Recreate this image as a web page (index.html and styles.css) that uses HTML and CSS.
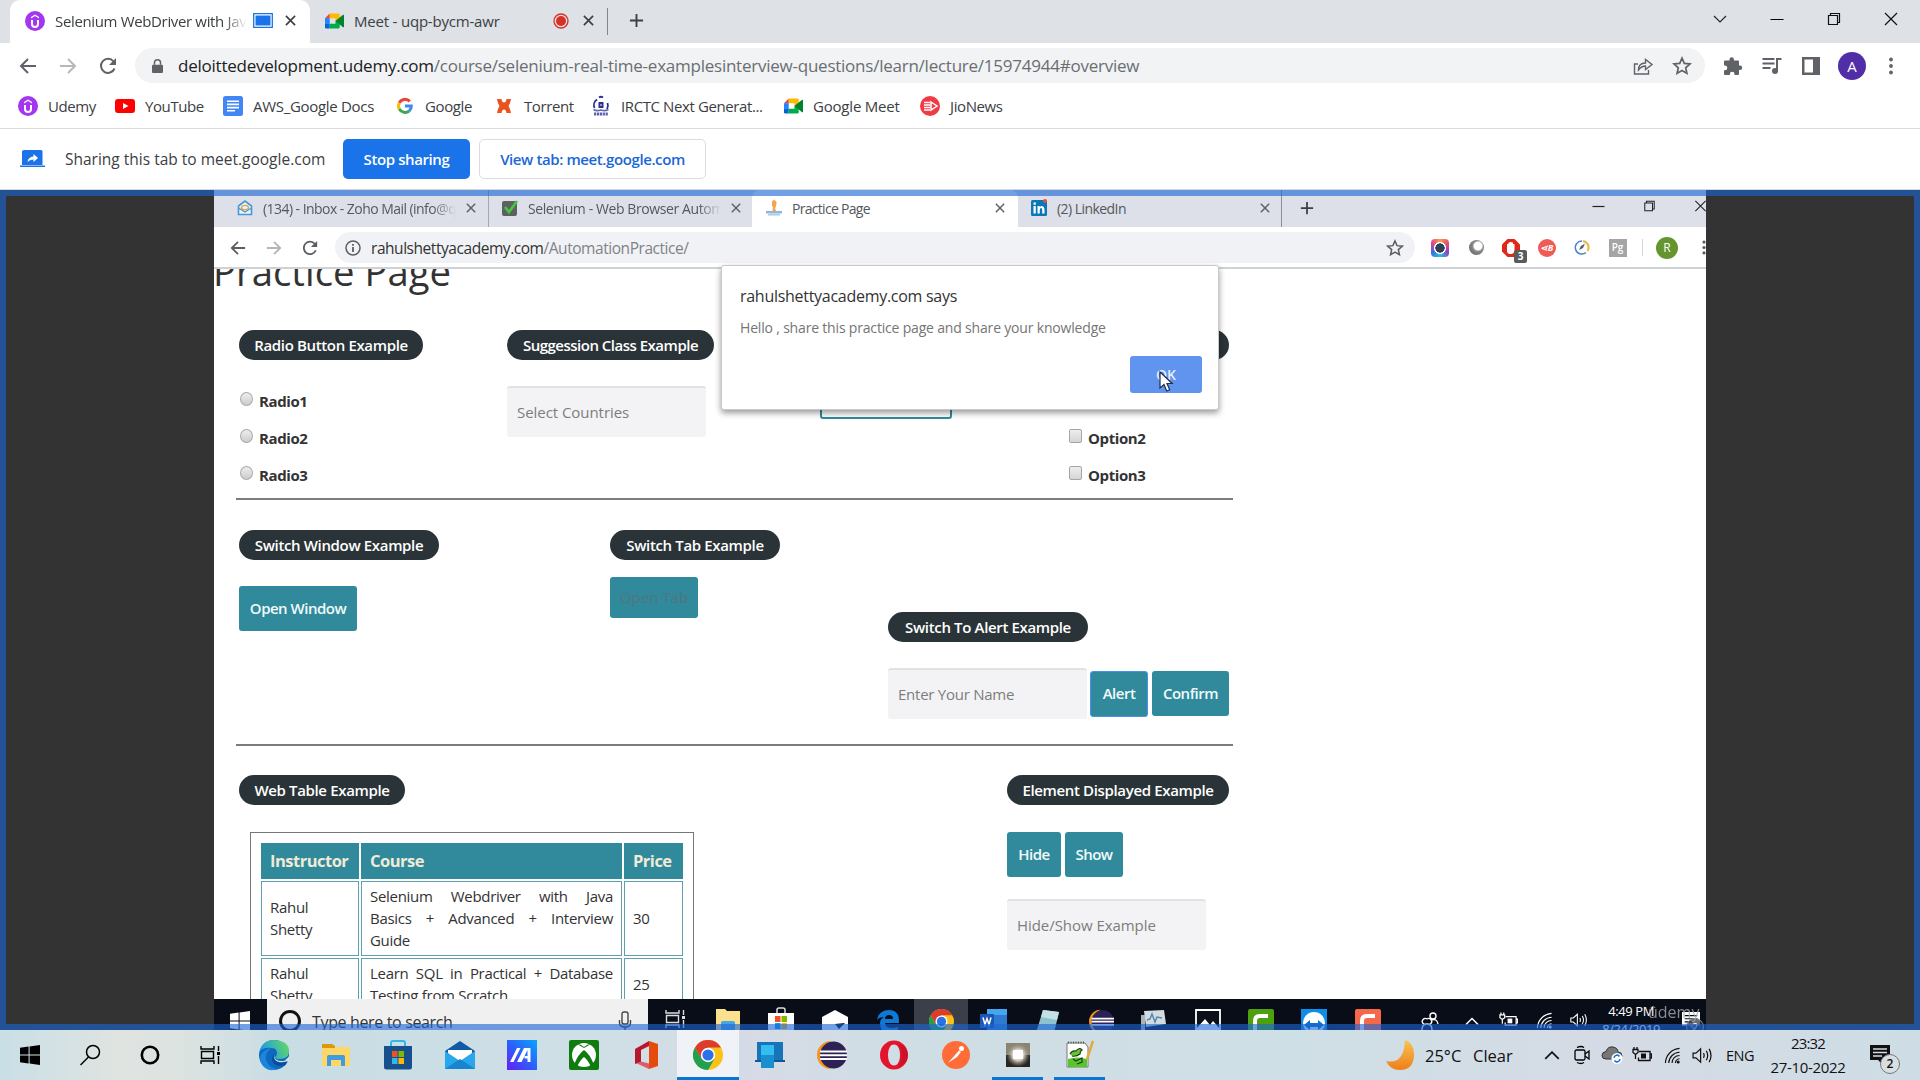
FILE: index.html
```html
<!DOCTYPE html>
<html lang="en">
<head>
<meta charset="utf-8">
<title>Selenium WebDriver with Java</title>
<link rel="stylesheet" href="styles.css">
</head>
<body>
<svg class="sprite" aria-hidden="true">
  <symbol id="close" viewBox="0 0 12 12"><path d="M1 1l10 10M11 1L1 11" fill="none" stroke="currentColor" stroke-width="1.8"/></symbol>
  <symbol id="winclose" viewBox="0 0 14 14"><path d="M1 1l12 12M13 1L1 13" fill="none" stroke="currentColor" stroke-width="1.2"/></symbol>
  <symbol id="restore" viewBox="0 0 14 14"><path d="M1.500 3.500h9v9h-9zM3.500 3.500v-2h9v9h-2" fill="none" stroke="currentColor" stroke-width="1.200"/></symbol>
  <symbol id="plus" viewBox="0 0 16 16"><path d="M8 1v14M1 8h14" fill="none" stroke="currentColor" stroke-width="2"/></symbol>
  <symbol id="back" viewBox="0 0 18 18"><path d="M17 9H2M9 2L2 9l7 7" fill="none" stroke="currentColor" stroke-width="2"/></symbol>
  <symbol id="fwd" viewBox="0 0 18 18"><path d="M1 9h15M9 2l7 7-7 7" fill="none" stroke="currentColor" stroke-width="2"/></symbol>
  <symbol id="reload" viewBox="0 0 18 18"><path d="M15.500 11.500A7 7 0 1 1 14.500 4.500" fill="none" stroke="currentColor" stroke-width="2"/><path d="M17 1v7h-7z" fill="currentColor"/></symbol>
  <symbol id="star" viewBox="0 0 20 20"><path d="M10 2.200l2.300 5.200 5.700.6-4.300 3.800 1.200 5.600L10 14.500l-4.900 2.900 1.200-5.600L2 8l5.700-.6z" fill="none" stroke="currentColor" stroke-width="1.700"/></symbol>
  <symbol id="dots" viewBox="0 0 4 18"><circle cx="2" cy="2.500" r="1.900"/><circle cx="2" cy="9" r="1.900"/><circle cx="2" cy="15.500" r="1.900"/></symbol>
  <symbol id="udemy" viewBox="0 0 20 20"><circle cx="10" cy="10" r="10" fill="#a435f0"/><path d="M6 6l4-2.500L14 6v1.500L10 5 6 7.500zM6 9v4a4 4 0 0 0 8 0V9h-2v4a2 2 0 0 1-4 0V9z" fill="#fff"/></symbol>
  <symbol id="meet" viewBox="0 0 20 16"><path d="M0 5L5 0v5z" fill="#ea4335"/><path d="M5 0h9a1.500 1.500 0 0 1 1.500 1.500V6L11 8V5H5z" fill="#ffba00"/><path d="M0 5h5v6H0z" fill="#2684fc"/><path d="M0 11h5v5H1.500A1.500 1.500 0 0 1 0 14.500z" fill="#0066da"/><path d="M5 11h6V8l4.500-2v8.500A1.500 1.500 0 0 1 14 16H5z" fill="#00ac47"/><path d="M11 8l8-6.500c.5-.4 1 0 1 .5v12c0 .5-.5.9-1 .5z" fill="#00832d"/></symbol>
  <symbol id="win" viewBox="0 0 20 20"><path d="M0 2.800L8.600 1.600v7.900H0zM9.600 1.500L20 0v9.500H9.600zM0 10.500h8.600v7.900L0 17.200zM9.600 10.500H20V20L9.600 18.500z" fill="currentColor"/></symbol>
  <symbol id="taskview" viewBox="0 0 22 20"><path d="M2 1v3h13V1M2 19v-3h13v3M2.500 6.500h12v7h-12zM19.500 1v5M19.500 11v8" fill="none" stroke="currentColor" stroke-width="1.400"/><path d="M18 7h3v3h-3z" fill="currentColor"/></symbol>
  <symbol id="chrome" viewBox="0 0 30 30"><circle cx="15" cy="15" r="15" fill="#fbc116"/><path d="M2 7.500A15 15 0 0 0 15 30l6.500-11.200L8.500 18.700z" fill="#20a050"/><path d="M2 7.500A15 15 0 0 1 28 7.500H15v7l-6.500 4.200z" fill="#de3b2f"/><circle cx="15" cy="15" r="7.200" fill="#fff"/><circle cx="15" cy="15" r="5.600" fill="#2b72e8"/></symbol>
  <symbol id="eclipse" viewBox="0 0 30 30"><path d="M14 1A14 14 0 0 0 14 29 16 16 0 0 1 14 1z" fill="#f59320"/><circle cx="16.500" cy="15" r="13.500" fill="#2c2255"/><path d="M3 10.500h27v2H3zM3 14.200h27v2H3zM3 18h27v2H3z" fill="#fff"/></symbol>
  <symbol id="battery" viewBox="0 0 20 16"><path d="M7 4.500h11v9H6.500v-3M18 7h1.500v4H18M1 2.500h5v3l-2.500 2-2.500-2zM2 0v3M5 0v3M3.500 7v5" fill="none" stroke="currentColor" stroke-width="1.300"/><path d="M9 6.500h5v5H9z" fill="currentColor"/></symbol>
  <symbol id="wifi" viewBox="0 0 18 18"><path d="M1.500 17A16 16 0 0 1 16.500 1.500M5 17A12 12 0 0 1 16.500 5.500M8.500 17a8 8 0 0 1 8-8M12 17a5 5 0 0 1 4.500-4.500" fill="none" stroke="currentColor" stroke-width="1.200"/><circle cx="15" cy="16" r="1.600" fill="currentColor"/></symbol>
  <symbol id="speaker" viewBox="0 0 22 18"><path d="M1 6.500h3L9 2v14L4 11.500H1zM12 6.500q1.500 2.500 0 5M15 4q3 5 0 10M18 2q4 7 0 14" fill="none" stroke="currentColor" stroke-width="1.300"/></symbol>
  <symbol id="caret" viewBox="0 0 14 8"><path d="M1 7l6-6 6 6" fill="none" stroke="currentColor" stroke-width="1.500"/></symbol>
  <symbol id="note" viewBox="0 0 20 20"><path d="M0 0h20v15h-7v5l-5-5H0z" fill="currentColor"/><path d="M3 4h14M3 7.500h14M3 11h9" stroke="var(--gap)" stroke-width="1.300"/></symbol>
  <symbol id="folder" viewBox="0 0 28 24"><path d="M0 1h11l2 3h15v19H0z" fill="#ffd767"/><path d="M0 1h10l3 2v2H0z" fill="#d99a10"/><path d="M5 23v-9q0-2 2-2h14q2 0 2 2v9h-4v-6H9v6z" fill="#3f9be2"/></symbol>
</svg>

<header class="chrome">
  <div class="tabstrip">
    <div class="tab tab-active">
      <svg class="i20"><use href="#udemy"/></svg>
      <span class="tab-title fade">Selenium WebDriver with Java</span>
      <svg class="sharing-mark" viewBox="0 0 20 15"><path d="M.7.700h18.600v13.600H.7z" fill="#fff" stroke="#1a73e8" stroke-width="1.300"/><path d="M2.500 2.500h15v10h-15z" fill="#1a73e8"/></svg>
      <svg class="x12"><use href="#close"/></svg>
    </div>
    <div class="tab tab-meet">
      <svg class="meet-ico"><use href="#meet"/></svg>
      <span class="tab-title">Meet - uqp-bycm-awr</span>
      <svg class="i16" viewBox="0 0 16 16"><circle cx="8" cy="8" r="7" fill="none" stroke="#d93025" stroke-width="1.300"/><circle cx="8" cy="8" r="5" fill="#d93025"/></svg>
      <svg class="x12"><use href="#close"/></svg>
    </div>
    <svg class="new-tab"><use href="#plus"/></svg>
    <div class="win-buttons">
      <svg class="chev" viewBox="0 0 14 8"><path d="M1 1l6 6 6-6" fill="none" stroke="#222" stroke-width="1.100"/></svg>
      <svg class="i14" viewBox="0 0 14 14"><path d="M.5 7.500h13" stroke="#000"/></svg>
      <svg class="i14"><use href="#restore"/></svg>
      <svg class="i14"><use href="#winclose"/></svg>
    </div>
  </div>

  <div class="toolbar">
    <svg class="nav"><use href="#back"/></svg>
    <svg class="nav dim"><use href="#fwd"/></svg>
    <svg class="nav"><use href="#reload"/></svg>
    <div class="omnibox">
      <svg class="lock" viewBox="0 0 12 15"><path d="M1 6h10q1 0 1 1v7q0 1-1 1H1q-1 0-1-1V7q0-1 1-1z" fill="#5f6368"/><path d="M2.700 6V4a3.300 3.300 0 0 1 6.600 0v2" fill="none" stroke="#5f6368" stroke-width="1.600"/></svg>
      <span class="url"><b>deloittedevelopment.udemy.com</b>/course/selenium-real-time-examplesinterview-questions/learn/lecture/15974944#overview</span>
      <svg class="i20 share" viewBox="0 0 20 20"><path d="M5 8H1.500v10h14v-4M5.500 14q0-7 7-7V3.500L19 8.500l-6.500 5V10q-4 0-7 4z" fill="none" stroke="currentColor" stroke-width="1.400"/></svg>
      <svg class="i20"><use href="#star"/></svg>
    </div>
    <div class="actions">
      <svg class="i20" viewBox="0 0 20 20"><path d="M1 5.500q0-1 1-1h4.500V3.500a2.200 2.200 0 0 1 4.400 0v1H15q1 0 1 1V9.500h1a2.200 2.200 0 0 1 0 4.400h-1V18q0 1-1 1h-3.500v-1a2.300 2.300 0 0 0-4.600 0v1H2q-1 0-1-1v-3.800h1a2.300 2.300 0 0 0 0-4.600H1z" fill="currentColor"/></svg>
      <svg class="i20" viewBox="0 0 20 20"><path d="M.5 3h12M.5 7.500h12M.5 12h8M15 15V3h4.500" fill="none" stroke="currentColor" stroke-width="2"/><circle cx="13" cy="15" r="3" fill="currentColor"/></svg>
      <svg class="i20" viewBox="0 0 20 20"><path d="M1 1h18v18H1zM3.500 3.500v13H12v-13z" fill="currentColor" fill-rule="evenodd"/></svg>
      <span class="avatar">A</span>
      <svg class="dots"><use href="#dots"/></svg>
    </div>
  </div>

  <nav class="bookmarks">
    <a class="bk b1"><svg class="i20"><use href="#udemy"/></svg><span>Udemy</span></a>
    <a class="bk b2"><svg class="i20" viewBox="0 0 20 20"><rect y="3" width="20" height="14" rx="3" fill="#f00"/><path d="M8 7l5.500 3L8 13z" fill="#fff"/></svg><span>YouTube</span></a>
    <a class="bk b3"><svg class="i20" viewBox="0 0 20 20"><rect width="20" height="20" rx="2.500" fill="#4285f4"/><path d="M4 5.200h12M4 8.400h12M4 11.600h12M4 14.800h8" stroke="#fff" stroke-width="1.600"/></svg><span>AWS_Google Docs</span></a>
    <a class="bk b4"><svg class="i16" viewBox="0 0 16 16"><g fill="none" stroke-width="3"><path d="M12.800 3.400A6.500 6.500 0 0 0 2.300 4.900" stroke="#ea4335"/><path d="M2.300 4.900a6.500 6.500 0 0 0 0 6.200" stroke="#fbbc05"/><path d="M2.300 11.100a6.500 6.500 0 0 0 10 1.700" stroke="#34a853"/><path d="M12.300 12.800A6.500 6.500 0 0 0 14.300 8H8" stroke="#4285f4"/></g></svg><span>Google</span></a>
    <a class="bk b5"><svg class="i16" viewBox="0 0 16 16"><path d="M1 1h4.500q.5 3.500 2.500 3.500T10.500 1H15q-.5 4-2.500 7 2 3 2.500 7h-4.500q-.5-3.500-2.500-3.500T5.500 15H1q.5-4 2.500-7Q1.500 5 1 1z" fill="#e9531d"/></svg><span>Torrent</span></a>
    <a class="bk b6"><svg class="i20" viewBox="0 0 20 20"><path d="M6 3.500A7 7 0 0 0 3.500 12M16.500 7a7 7 0 0 1-.5 6M8 1.500q2-1.500 4 0" fill="none" stroke="#2c2f8f" stroke-width="1.800"/><path d="M7.500 6h5v6h-5z" fill="#2c2f8f"/><path d="M9 9h2" stroke="#fff"/><path d="M2.500 13.500q3 2 7.500.5 4 1.500 7.500-.5" fill="none" stroke="#6467b0" stroke-width="1.600"/><path d="M3 18h14" stroke="#5c5fae" stroke-width="3" stroke-dasharray="2.200 .7"/></svg><span>IRCTC Next Generat...</span></a>
    <a class="bk b7"><svg class="meet-ico"><use href="#meet"/></svg><span>Google Meet</span></a>
    <a class="bk b8"><svg class="i20" viewBox="0 0 20 20"><circle cx="10" cy="10" r="10" fill="#f03b47"/><path d="M4 6.500h6M4 9h6M4 11.500h6M4 14h6" stroke="#fff" stroke-width="1.300"/><path d="M11 6l6 4-6 4z" fill="none" stroke="#fff" stroke-width="1.500"/></svg><span>JioNews</span></a>
  </nav>

  <div class="sharebar">
    <svg class="share-ico" viewBox="0 0 25 18"><path d="M4 0h17q1.500 0 1.500 1.500V15H2V1.500Q2 0 4 0zM0 15.500h25V17H0z" fill="#1a73e8"/><path d="M7.500 12q.5-5 6-5.500V4l4.500 4-4.500 4V9.500q-4 0-6 2.500z" fill="#fff"/></svg>
    <span class="share-text">Sharing this tab to meet.google.com</span>
    <button class="stop">Stop sharing</button>
    <button class="view">View tab: meet.google.com</button>
  </div>
</header>

<main class="stage">
  <section class="video">
    <div class="v-tabs">
      <div class="v-tab vt1"><svg class="i16" viewBox="0 0 16 16"><path d="M1.500 6L8 1l6.500 5v8.500h-13z" fill="#eaf4fc" stroke="#4a98d3" stroke-width="1.600"/><path d="M1.500 8L8 12l6.500-4" fill="none" stroke="#4a98d3" stroke-width="1.400"/><ellipse cx="8" cy="7.500" rx="3.500" ry="2.200" fill="none" stroke="#d9a54e" stroke-width="1.300"/></svg><span class="fade">(134) - Inbox - Zoho Mail (info@q</span><svg class="x10"><use href="#close"/></svg></div>
      <div class="v-tab vt2"><svg class="i16" viewBox="0 0 16 16"><rect y="1" width="15" height="15" rx="2" fill="#5d625f"/><path d="M3 7l4 5L15 1" fill="none" stroke="#45c645" stroke-width="2.600"/></svg><span class="fade">Selenium - Web Browser Automa</span><svg class="x10"><use href="#close"/></svg></div>
      <div class="v-tab vt3"><svg class="i16" viewBox="0 0 16 16"><path d="M7 0q4 0 3.500 4Q10 7 9 8l1 3H6.500L7 7 6 6V2z" fill="#f3a64a"/><path d="M0 11h16v2.500H0z" fill="#8db7dc"/><path d="M2 14h12v1.500H2z" fill="#a9c9e4"/></svg><span>Practice Page</span><svg class="x10"><use href="#close"/></svg></div>
      <div class="v-tab vt4"><svg class="i16" viewBox="0 0 16 16"><rect width="16" height="16" rx="1.500" fill="#0a77b7"/><path d="M2.500 6h2.300v7.500H2.500zM2.500 2.500h2.300v2.200H2.500zM6.500 6h2.200v1q2-2 4 0 .8 1 .8 3v3.500h-2.300V10q0-2-1.200-2T8.800 10v3.500H6.500z" fill="#fff"/><circle cx="14" cy="1" r="2" fill="#e0533f"/></svg><span>(2) LinkedIn</span><svg class="x10"><use href="#close"/></svg></div>
      <svg class="v-plus"><use href="#plus"/></svg>
      <div class="v-win"><svg viewBox="0 0 12 12"><path d="M0 6.500h12" stroke="#222" stroke-width="1.200"/></svg><svg><use href="#restore"/></svg><svg><use href="#winclose"/></svg></div>
    </div>
    <div class="v-bar">
      <svg class="i16"><use href="#back"/></svg>
      <svg class="i16 dim"><use href="#fwd"/></svg>
      <svg class="i16"><use href="#reload"/></svg>
      <div class="v-omni">
        <svg class="i16" viewBox="0 0 16 16"><circle cx="8" cy="8" r="7" fill="none" stroke="#5a5d61" stroke-width="1.500"/><path d="M8 7v5M8 4v1.800" stroke="#5a5d61" stroke-width="1.800"/></svg>
        <span class="v-url"><b>rahulshettyacademy.com</b>/AutomationPractice/</span>
        <svg class="i18"><use href="#star"/></svg>
      </div>
      <div class="v-ext">
        <span class="ext-lens"></span>
        <span class="ext-ball"></span>
        <span class="ext-block"><svg viewBox="0 0 18 18"><path d="M5.500 0h7L18 5.500v7L12.500 18h-7L0 12.500v-7z" fill="#e0281a"/><path d="M5 9V5h1.500V3.500H8V3h1.500v.5H11V5h1.500v6q0 4-4 4T5 11z" fill="#fff"/></svg><em>3</em></span>
        <span class="ext-b">⋖B</span>
        <svg class="i18" viewBox="0 0 18 18"><path d="M9 2a6.500 6.500 0 1 0 4 11.500" fill="none" stroke="#4a83c9" stroke-width="1.500"/><path d="M10 2a6.500 6.500 0 0 1 4.500 10" fill="none" stroke="#eeb54a" stroke-width="2"/><path d="M6 11l2-4 4-2.500L10 9z" fill="#4d5a67"/></svg>
        <span class="ext-pg">Pg</span>
        <span class="v-avatar">R</span>
        <svg class="v-dots"><use href="#dots"/></svg>
      </div>
    </div>

    <article class="page">
      <div class="heading"><h1>Practice Page</h1></div>
      <div class="row row1">
        <div class="c-radio">
          <span class="pill p-radio">Radio Button Example</span>
          <div class="opts">
            <label><i class="radio"></i>Radio1</label>
            <label><i class="radio"></i>Radio2</label>
            <label><i class="radio"></i>Radio3</label>
          </div>
        </div>
        <div class="c-sugg">
          <span class="pill p-sugg">Suggession Class Example</span>
          <div class="field f-count">Select Countries</div>
        </div>
        <div class="c-drop"><div class="dropdown"></div></div>
        <div class="c-check">
          <span class="pill p-check"></span>
          <div class="opts">
            <label><i class="check"></i>Option1</label>
            <label><i class="check"></i>Option2</label>
            <label><i class="check"></i>Option3</label>
          </div>
        </div>
      </div>
      <div class="rule"></div>
      <div class="row row2">
        <div class="c-win"><span class="pill p-win">Switch Window Example</span><div class="btn btn-win">Open Window</div></div>
        <div class="c-tab"><span class="pill p-tab">Switch Tab Example</span><div class="btn btn-tab">Open Tab</div></div>
        <div class="c-alert"><span class="pill p-alert">Switch To Alert Example</span>
          <div class="line"><div class="field">Enter Your Name</div><div class="btn btn-alert">Alert</div><div class="btn btn-conf">Confirm</div></div>
        </div>
      </div>
      <div class="rule"></div>
      <div class="row row3">
        <div class="c-table"><span class="pill p-table">Web Table Example</span>
          <div class="frame">
            <table>
              <tr><th class="w1">Instructor</th><th class="w2">Course</th><th class="w3">Price</th></tr>
              <tr class="r1"><td>Rahul Shetty</td><td class="just">Selenium Webdriver with Java Basics + Advanced + Interview Guide</td><td>30</td></tr>
              <tr class="r2"><td>Rahul Shetty</td><td class="just">Learn SQL in Practical + Database Testing from Scratch</td><td>25</td></tr>
            </table>
          </div>
        </div>
        <div class="c-elem"><span class="pill p-elem">Element Displayed Example</span>
          <div class="line"><div class="btn btn-hide">Hide</div><div class="btn btn-show">Show</div></div>
          <div class="field">Hide/Show Example</div>
        </div>
      </div>
    </article>

    <div class="v-task">
      <span class="v-start"><svg class="i20"><use href="#win"/></svg></span>
      <div class="v-search"><i class="ring"></i><span>Type here to search</span>
        <svg class="mic" viewBox="0 0 14 20"><rect x="4" y="1" width="6" height="12" rx="2" fill="none" stroke="#444" stroke-width="1.400"/><path d="M1.500 9v3q0 4 5.500 4t5.500-4V9M7 16v4" fill="none" stroke="#444" stroke-width="1.400"/></svg></div>
      <span class="vs"><svg width="22" height="20"><use href="#taskview"/></svg></span>
      <span class="vs"><svg width="26" height="22" viewBox="0 0 26 22"><path d="M1 0h9l2 2h13v20H1z" fill="#fbe08e"/><path d="M6 22v-8q0-2 2-2h10q2 0 2 2v8z" fill="#44a6e6"/></svg></span>
      <span class="vs"><svg width="26" height="24" viewBox="0 0 26 24"><path d="M9 4V1q0-2 2-2h4q2 0 2 2v3" fill="none" stroke="#ddd" stroke-width="1.500"/><path d="M0 4h26v20H0z" fill="#fff"/><path d="M7 7h5.500v6H7z" fill="#f25022"/><path d="M13.500 7H19v6h-5.500z" fill="#7fba00"/><path d="M7 14h5.500v6H7z" fill="#00a4ef"/><path d="M13.500 14H19v6h-5.500z" fill="#ffb900"/></svg></span>
      <span class="vs"><svg width="26" height="22" viewBox="0 0 26 22"><path d="M0 8l13-7 13 7v14H0z" fill="#fff"/><path d="M1 9l12 6 10-1-6 6-4-5z" fill="#0a0f18"/></svg></span>
      <span class="vs"><svg width="24" height="24" viewBox="0 0 24 24"><path d="M1 11Q3 1 13 1t10 11v2H9q0 5 7 5 4 0 6-1v4q-4 2-8 2-10 0-10-10 0-4 4-6-5 0-7 3zM9 10h8q0-4-4-4t-4 4z" fill="#0d7ad8"/></svg></span>
      <span class="vs vs-on"><svg width="25" height="25"><use href="#chrome"/></svg></span>
      <span class="vs"><svg width="28" height="24" viewBox="0 0 28 24"><path d="M7 0h20v24H7z" fill="#2d7bd0"/><path d="M7 0h20v6H7z" fill="#45a5ee"/><path d="M0 5h14v14H0z" fill="#1a56b5"/><path d="M3 8.500l2 7 2-6 2 6 2-7" fill="none" stroke="#fff" stroke-width="1.500"/></svg></span>
      <span class="vs"><svg width="24" height="24" viewBox="0 0 24 24"><path d="M7 1l16 2-5 21H0z" fill="#8cc3cf"/><path d="M7 1l16 2-2 8L5 8z" fill="#c5e0e4"/></svg></span>
      <span class="vs"><svg width="25" height="25"><use href="#eclipse"/></svg></span>
      <span class="vs"><svg width="26" height="22" viewBox="0 0 26 22"><path d="M3 2l20-1 2 14-20 3z" fill="#d5dce0"/><path d="M6 11l3-1 2-5 3 8 2-5 5 1" fill="none" stroke="#4f88b5" stroke-width="1.500"/><path d="M0 6h4v16H0z" fill="#aab4bb"/></svg></span>
      <span class="vs"><svg width="26" height="24" viewBox="0 0 26 24"><path d="M1 1h24v23H1z" fill="#0a0f18" stroke="#fff" stroke-width="1.800"/><path d="M1 20l9-10 5 6 3-4 7 8v4H1z" fill="#fff"/></svg></span>
      <span class="vs"><svg width="26" height="26" viewBox="0 0 26 26"><rect width="26" height="26" rx="2" fill="#4ea10c"/><path d="M20 7h-8q-5 0-5 5v14" fill="none" stroke="#fff" stroke-width="4"/></svg></span>
      <span class="vs"><svg width="26" height="26" viewBox="0 0 26 26"><rect width="26" height="26" fill="#0e8ee9"/><circle cx="13" cy="14" r="11" fill="#fff"/><path d="M3 16l6-5v3h8v-3l6 5-6 5v-3H9v3z" fill="#0e72c9"/></svg></span>
      <span class="vs"><svg width="26" height="26" viewBox="0 0 26 26"><rect width="26" height="26" rx="2" fill="#f4694b"/><path d="M20 7h-8q-5 0-5 5v14" fill="none" stroke="#fff" stroke-width="4"/></svg></span>
      <div class="v-tray">
        <svg width="18" height="18" viewBox="0 0 18 18"><path d="M6 7a3 3 0 1 1 0 5 3 3 0 1 1 0-5M1 18q0-6 5-6t5 6M12 1a3 3 0 1 1 0 6 3 3 0 1 1 0-6M10 8q6-2 7 4" fill="none" stroke="#fff" stroke-width="1.400"/></svg>
        <svg class="v-caret" width="14" height="9"><use href="#caret"/></svg>
        <svg width="19" height="16"><use href="#battery"/></svg>
        <svg class="v-wifi" width="17" height="17"><use href="#wifi"/></svg>
        <svg class="v-speaker" width="18" height="16"><use href="#speaker"/></svg>
        <div class="v-clock"><span>4:49 PM</span><span>8/24/2019</span></div>
        <div class="v-note"><svg width="18" height="18"><use href="#note"/></svg><em>2</em></div>
      </div>
      <span class="watermark">ûdemy</span>
    </div>

    <div class="dialog">
      <p class="d-title">rahulshettyacademy.com says</p>
      <p class="d-msg">Hello , share this practice page and share your knowledge</p>
      <div class="ok">OK</div>
      <svg class="cursor" viewBox="0 0 14 22"><path d="M1 1v16l4-3.500 2.700 6.500 3-1.300L8 12.500h5.200z" fill="#fff" stroke="#22304a" stroke-width="1.200"/></svg>
    </div>
  </section>
</main>

<footer class="taskbar">
  <span class="s60"><svg class="i20"><use href="#win"/></svg></span>
  <span class="s60"><svg width="22" height="22" viewBox="0 0 22 22"><circle cx="14" cy="8" r="6.500" fill="none" stroke="#000" stroke-width="1.500"/><path d="M9.500 13L1.500 21" stroke="#000" stroke-width="1.500"/></svg></span>
  <span class="s60"><svg class="i20" viewBox="0 0 20 20"><circle cx="10" cy="10" r="8.200" fill="none" stroke="#000" stroke-width="2.600"/></svg></span>
  <span class="s60"><svg width="22" height="20"><use href="#taskview"/></svg></span>
  <div class="apps">
    <span class="s62"><svg width="30" height="30" viewBox="0 0 30 30"><defs><linearGradient id="eg" x1="0" x2="1" y1=".3" y2="0"><stop offset="0" stop-color="#1f9be8"/><stop offset="1" stop-color="#68dd5a"/></linearGradient></defs><circle cx="15" cy="15" r="15" fill="#0f68c0"/><path d="M.5 12Q3 0 15 0q15 1 15 11 0 8-9 8-5 0-5-2 2-1 2-4 0-5-6-5Q4 7 .5 12z" fill="url(#eg)"/><path d="M12 8q-8 7-4 14 3 7 11 7-12 4-17-6Q-2 12 12 8z" fill="#1c86dd"/><path d="M16 13.500q-3 3 0 7 4 4 13 .5l-3 4.500q-3 .5-6 .5-6-1-7-6 0-5 3-6.500z" fill="#0c4c9c"/><path d="M16 13.500q-2 3 1 6 4 2.500 9 1l4-4v5l-3 0q-8 2-11-2-2-3 0-6z" fill="#d6e4e8"/></svg></span>
    <span class="s62"><svg width="28" height="24"><use href="#folder"/></svg></span>
    <span class="s62"><svg width="28" height="30" viewBox="0 0 28 30"><path d="M7 7V3q0-2 2-2h10q2 0 2 2v4" fill="none" stroke="#31b7ec" stroke-width="2"/><path d="M0 6h28v21q0 2.500-2.500 2.500h-23Q0 29.500 0 27z" fill="#17508b"/><path d="M8 11h5.500v6H8z" fill="#f25022"/><path d="M14.500 11H20v6h-5.500z" fill="#7fba00"/><path d="M8 18h5.500v6H8z" fill="#31b7ec"/><path d="M14.500 18H20v6h-5.500z" fill="#ffb900"/></svg></span>
    <span class="s62"><svg width="30" height="28" viewBox="0 0 30 28"><path d="M0 10L15 0l15 10v5H0z" fill="#0f5ba7"/><path d="M3 9h24v10H3z" fill="#fff"/><path d="M0 10l15 10L30 10v18H0z" fill="#28a8ea"/><path d="M0 28l15-10 15 10z" fill="#1684d0"/></svg></span>
    <span class="s62"><svg width="30" height="30" viewBox="0 0 30 30"><defs><linearGradient id="ag" x1="0" y1="1" x2="1" y2="0"><stop offset="0" stop-color="#6a1cf5"/><stop offset=".5" stop-color="#2a62fa"/><stop offset="1" stop-color="#0ba4ff"/></linearGradient></defs><path d="M0 0h30v30H0z" fill="url(#ag)"/><path d="M3 22L10 8h3.500l-7 14zM10 22l7-14h6.500v14h-3v-3.500h-3V16h3v-6l-6 12z" fill="#fff"/></svg></span>
    <span class="s62"><svg width="30" height="30" viewBox="0 0 30 30"><rect width="30" height="30" rx="2" fill="#107c10"/><circle cx="15" cy="15" r="12" fill="#fff"/><path d="M5 25Q9 14 15 10q6 4 10 15l-3 2q-3-7-7-10-4 3-7 10zM8 4q4 0 7 3 3-3 7-3l-7 4z" fill="#107c10"/></svg></span>
    <span class="s62"><svg width="23" height="28" viewBox="0 0 23 28"><path d="M14 0l9 3v22l-9 3z" fill="#e64a0c"/><path d="M0 8L14 0v5L6 9v12l-6 2z" fill="#b5172f"/><path d="M2 22.500l4-2 8 2V28z" fill="#e05a6e"/></svg></span>
    <span class="s62 on"><svg width="30" height="30"><use href="#chrome"/></svg></span>
    <span class="s62"><svg width="30" height="28" viewBox="0 0 30 28"><path d="M2 1h26v18H2z" fill="#1674b9"/><path d="M0 19h30v2H0z" fill="#0d5a99"/><path d="M6 4h13v23H6z" fill="#36bdf0"/><path d="M6 14h13v13H6z" fill="#1a8fd0"/></svg></span>
    <span class="s62"><svg width="30" height="30"><use href="#eclipse"/></svg></span>
    <span class="s62"><svg width="28" height="30" viewBox="0 0 28 30"><path d="M14 .5a14 14.500 0 1 0 0 29 14 14.500 0 1 0 0-29m0 4c4 0 6 5 6 10.500S18 25.500 14 25.500 8 20.500 8 15 10 4.500 14 4.500z" fill="#e3142c" fill-rule="evenodd"/><path d="M19 4q9 3 9 11t-9 11.500Q22 21 22 15T19 4z" fill="#b5101f" opacity=".5"/></svg></span>
    <span class="s62"><svg width="28" height="28" viewBox="0 0 28 28"><circle cx="14" cy="14" r="14" fill="#ff6c37"/><circle cx="19.500" cy="7.500" r="2.500" fill="#fff"/><path d="M6 22L17 9.500l2 1.500-4 5-6 4z" fill="#fff"/></svg></span>
    <span class="s62 run"><svg width="24" height="24" viewBox="0 0 24 24"><defs><radialGradient id="glow"><stop offset=".45" stop-color="#d9d5ca"/><stop offset="1" stop-color="#8c8473" stop-opacity="0"/></radialGradient></defs><path d="M0 0h24v12H0z" fill="#8c8473"/><path d="M0 12h24v12H0z" fill="#262521"/><path d="M0 0h24v24H0z" fill="url(#glow)"/><path d="M7 7h10v9H7z" fill="#fff"/></svg></span>
    <span class="s62 run"><svg width="28" height="28" viewBox="0 0 28 28"><path d="M1 2h18l3 4v20H1z" fill="#fff" stroke="#777"/><path d="M2 18q9-3 19 0v8H2z" fill="#56c62b"/><path d="M4 13q2-4 6-3 3-4 6-1-2 1-2 4-4 3-8 2M7 18l3 2 6-3v4l-5 2" fill="#66c430" stroke="#1e3d18" stroke-width="1.200"/><path d="M27 0l-6 18" stroke="#e6a93b" stroke-width="2.500"/><path d="M2 1.500h17" stroke="#555" stroke-width="2" stroke-dasharray="1 1.500"/></svg></span>
  </div>
  <div class="tray">
    <svg class="moon" viewBox="0 0 28 30"><defs><linearGradient id="mg" x1="0" x2="0" y1="0" y2="1"><stop offset="0" stop-color="#f7c352"/><stop offset="1" stop-color="#ef7f1a"/></linearGradient></defs><path d="M19 0q9 3 9 14 0 16-14 16Q4 30 0 21q18 4 19-21z" fill="url(#mg)"/></svg>
    <span class="temp">25°C</span><span class="clear">Clear</span>
    <div class="tray-icons">
      <span><svg width="16" height="9"><use href="#caret"/></svg></span>
      <span><svg width="16" height="20" viewBox="0 0 16 20"><rect x="1" y="5" width="10" height="10" rx="1.500" fill="none" stroke="#000" stroke-width="1.300"/><path d="M11 9l4-3v8l-4-3M3 2.500q4-2 7 0M3 17.500q4 2 7 0" fill="none" stroke="#000" stroke-width="1.300"/></svg></span>
      <span><svg width="21" height="18" viewBox="0 0 21 18"><path d="M4 13Q0 13 0 9.500 0 6 4 5.500 6 0 11 1t5 5q4 0 4 4 0 3-4 3z" fill="#777" stroke="#333"/><circle cx="15" cy="12.500" r="5.500" fill="#fff"/><path d="M12 12a3 3 0 0 1 5.500-1.500M18 13a3 3 0 0 1-5.500 1.500" fill="none" stroke="#1976d2" stroke-width="1.500"/></svg></span>
      <span><svg width="20" height="16"><use href="#battery"/></svg></span>
      <span><svg width="17" height="17"><use href="#wifi"/></svg></span>
      <span><svg width="21" height="17"><use href="#speaker"/></svg></span>
    </div>
    <span class="eng">ENG</span>
    <div class="clock"><span class="time">23:32</span><span>27-10-2022</span></div>
    <div class="notif"><svg width="20" height="20"><use href="#note"/></svg><em>2</em></div>
  </div>
</footer>
</body>
</html>
```
FILE: styles.css
```css
* { box-sizing: border-box; }
body {
  margin: 0;
  width: 1920px;
  height: 1080px;
  overflow: hidden;
  font-family: "Open Sans", "Noto Sans", sans-serif;
  color: #3c4043;
  display: flex;
  flex-direction: column;
}
svg { display: block; flex: none; overflow: visible; }
.sprite { position: absolute; width: 0; height: 0; }
span, p, button, th, td, label { white-space: nowrap; }
.i14 { width: 14px; height: 14px; }
.i16 { width: 16px; height: 16px; }
.i18 { width: 18px; height: 18px; }
.i20 { width: 20px; height: 20px; }
.x12 { width: 11px; height: 11px; color: #3c4043; }
.x10 { width: 10px; height: 10px; color: #5f6368; }
.dim { opacity: .45; }
.fade { overflow: hidden; -webkit-mask-image: linear-gradient(90deg, #000 88%, transparent); mask-image: linear-gradient(90deg, #000 88%, transparent); }
.meet-ico { width: 19px; height: 16px; }

/* browser chrome */
.chrome { flex: none; height: 190px; background: #fff; }
.tabstrip { height: 43px; background: #dee1e6; display: flex; align-items: stretch; padding-left: 10px; }
.tab { display: flex; align-items: center; font-size: 15px; letter-spacing: -.2px; padding-bottom: 2px; }
.tab-active { width: 300px; background: #fff; border-radius: 10px 10px 0 0; padding-left: 15px; }
.tab-active .tab-title { width: 192px; margin-left: 10px; letter-spacing: -.35px; }
.sharing-mark { width: 20px; height: 15px; margin: 0 12px 0 6px; }
.tab-meet { width: 298px; padding-left: 15px; border-right: 1px solid transparent; border-image: linear-gradient(transparent 20%, #80868b 20%, #80868b 80%, transparent 80%) 1; }
.tab-meet .tab-title { width: 189px; margin-left: 10px; }
.tab-meet .i16 { margin: 0 14px 0 10px; }
.new-tab { width: 15px; height: 15px; margin: 13px 0 0 21px; color: #3c4043; }
.win-buttons { margin-left: auto; display: flex; align-items: center; gap: 43px; padding: 0 22px 6px 0; color: #111; }
.chev { width: 14px; height: 8px; }

.toolbar { height: 45px; display: flex; align-items: center; padding-left: 19px; color: #5f6368; }
.nav { width: 18px; height: 18px; margin-right: 22px; }
.omnibox { width: 1570px; height: 35px; margin-left: -4px; border-radius: 18px; background: #f1f3f4; display: flex; align-items: center; padding: 0 13px 0 17px; }
.lock { width: 11px; height: 14px; }
.url { font-size: 17px; letter-spacing: -.24px; margin-left: 15px; color: #6a6e73; }
.url b { font-weight: 400; color: #202124; }
.share { margin-left: auto; margin-right: 19px; }
.actions { display: flex; align-items: center; gap: 19px; margin-left: 18px; }
.avatar { width: 28px; height: 28px; margin: 0 -1px 0 -2px; border-radius: 50%; background: #512da8; color: #fff; display: grid; place-items: center; font-size: 15px; }
.dots { width: 4px; height: 18px; margin-left: 5px; fill: #5f6368; }

.bookmarks { height: 41px; border-bottom: 1px solid #dadce0; display: flex; align-items: center; padding: 0 0 5px 18px; font-size: 15px; letter-spacing: -.4px; }
.bk { display: flex; align-items: center; gap: 10px; }
.b1 { width: 97px; }
.b2 { width: 108px; }
.b3 { width: 174px; letter-spacing: -.3px; }
.b4 { width: 99px; gap: 12px; }
.b5 { width: 95px; gap: 12px; }
.b6 { width: 193px; }
.b7 { width: 136px; letter-spacing: -.2px; }

.sharebar { height: 61px; border-bottom: 1px solid #d5d7da; display: flex; align-items: center; padding-left: 20px; font-size: 15px; }
.share-ico { width: 25px; height: 18px; }
.share-text { width: 278px; padding-left: 20px; font-size: 15.5px; }
button { font: inherit; padding: 0; border: 0; border-radius: 5px; height: 40px; letter-spacing: -.4px; }
.stop { margin-left: 20px; width: 127px; background: #1a73e8; color: #fff; font-weight: 600; }
.view { margin-left: 9px; width: 227px; background: #fff; border: 1px solid #dadce0; color: #1a67d8; font-weight: 600; }

/* shared tab viewport */
.stage { flex: none; height: 840px; background: #333; padding-left: 214px; position: relative; overflow: hidden; }
.stage::after { content: ""; position: absolute; inset: 0; border: 6px solid rgba(27, 102, 212, .62); }
.video { width: 1492px; height: 840px; background: #fff; position: relative; overflow: hidden; display: flex; flex-direction: column; }
.v-tabs { flex: none; height: 37px; background: #dddfe9; display: flex; font-size: 14px; letter-spacing: -.55px; color: #55585e; }
.v-tab { height: 37px; display: flex; align-items: center; padding-bottom: 1px; }
.v-tab span { flex: none; width: 193px; margin-left: 10px; }
.v-tab .x10 { margin-left: 10px; }
.vt1 { width: 275px; padding-left: 23px; border-right: 1px solid #a5a8b0; }
.vt2 { width: 263px; padding-left: 13px; letter-spacing: -.4px; }
.vt3 { width: 266px; background: #fff; border-radius: 8px 8px 0 0; padding-left: 14px; letter-spacing: -.7px; }
.vt4 { width: 264px; padding-left: 13px; border-right: 1px solid #8b8e96; }
.v-plus { width: 14px; height: 14px; margin: 11px 0 0 18px; color: #3c4043; }
.v-win { margin: 0 -1px 0 auto; display: flex; gap: 38px; align-items: center; padding-bottom: 5px; color: #222; }
.v-win svg { width: 13px; height: 12px; }
.v-bar { flex: none; height: 42px; display: flex; align-items: center; border-bottom: 2px solid #d0d1d4; padding: 1px 0 0 16px; color: #5a5d61; }
.v-bar > .i16 { margin-right: 20px; }
.v-omni { width: 1080px; height: 31px; margin-left: -3px; border-radius: 16px; background: #f1f2f5; display: flex; align-items: center; padding: 0 11px 0 10px; }
.v-url { font-size: 15.5px; letter-spacing: -.45px; margin: 0 auto 0 10px; color: #808388; }
.v-url b { font-weight: 400; color: #333; }
.v-ext { display: flex; align-items: center; gap: 17.5px; margin-left: 16px; }
.v-ext > * { flex: none; }
.ext-lens { width: 18px; height: 18px; border-radius: 4px; background: radial-gradient(circle, #2f4056 0 35%, #fff 38% 46%, transparent 49%), conic-gradient(#f7a23b, #e44b7c, #8b44c8, #22c7d8, #3b6fe0, #e0409a, #f7a23b); }
.ext-ball { width: 15px; height: 15px; margin: 0 1px 0 2px; border-radius: 50%; background: radial-gradient(circle at 60% 40%, #fff 0 30%, #8a8a8a 42%, #555 100%); }
.ext-block { width: 18px; height: 18px; position: relative; }
.ext-block em { position: absolute; left: 12px; top: 11px; width: 13px; height: 13px; background: #5b5b5b; border-radius: 2px; color: #fff; font: 700 10px/13px "Open Sans", sans-serif; text-align: center; }
.ext-b { width: 18px; height: 18px; border-radius: 50%; background: #ef5b55; color: #fff; font: italic 700 9px/18px "Open Sans", sans-serif; text-align: center; }
.ext-pg { width: 18px; height: 18px; background: #a5a5a5; color: #fff; font: 600 10px/17px "Open Sans", sans-serif; text-align: center; }
.v-avatar { width: 22px; height: 22px; margin-left: 12px; border-radius: 50%; background: #64952f; color: #fff; font-size: 12px; line-height: 22px; text-align: center; position: relative; }
.v-avatar::before { content: ""; position: absolute; left: -14px; top: 2px; width: 1px; height: 17px; background: #d5d5d8; }
.v-dots { width: 4px; height: 15px; margin-left: 6px; fill: #5a5d61; }

/* practice page */
.page { flex: 1; min-height: 0; overflow: hidden; color: #333; font-size: 16px; }
.heading { height: 61px; overflow: hidden; }
h1 { margin: -23px 0 0 -1px; font-size: 38.3px; line-height: 50px; font-weight: 400; white-space: nowrap; }
.row { display: flex; padding-left: 25px; }
.rule { height: 2px; width: 997px; margin-left: 22px; background: #7c7c7c; }
.pill { display: flex; align-items: center; justify-content: center; height: 30px; border-radius: 15px; background: #2a3438; color: #fff; font-weight: 600; font-size: 15px; letter-spacing: -.35px; }
.p-sugg { letter-spacing: -.5px; }
.field { width: 199px; height: 51px; background: #f3f3f5; border-top: 2px solid #e2e2e4; border-radius: 3px; padding: 0 0 2px 10px; display: flex; align-items: center; color: #7d7d7d; font-size: 15px; letter-spacing: -.05px; white-space: nowrap; }
.btn { display: flex; align-items: center; justify-content: center; height: 45px; padding-bottom: 1px; background: #318a9b; color: #f0fafa; border-radius: 3px; font-size: 15px; letter-spacing: -.5px; font-weight: 600; white-space: nowrap; }
.line { display: flex; }
.row1 { height: 168px; }
.c-radio { width: 268px; }
.p-radio { width: 184px; }
.c-sugg { width: 313px; }
.p-sugg { width: 207px; }
.f-count { margin-top: 26px; }
.c-drop { width: 249px; padding-top: 40px; }
.dropdown { width: 132px; height: 49px; border: 2px solid #318a9b; border-radius: 3px; }
.p-check { width: 160px; }
.opts { padding-top: 23px; }
label { display: flex; align-items: center; height: 36.7px; font-weight: 700; font-size: 15px; letter-spacing: -.4px; }
.radio { width: 13px; height: 14px; margin: -4px 6px 0 1px; border: 1px solid #aaa; border-radius: 50%; background: linear-gradient(#eee, #ccc); }
.check { width: 13px; height: 14px; margin: -4px 6px 0 0; border: 1px solid #a5a5a5; border-radius: 2px; background: linear-gradient(#eee, #d5d5d5); }
.row2 { height: 244px; padding-top: 30px; }
.c-win { width: 371px; }
.p-win { width: 200px; }
.btn-win { width: 118px; margin-top: 26px; }
.c-tab { width: 278px; }
.p-tab { width: 170px; }
.btn-tab { width: 88px; height: 41px; margin-top: 17px; color: #4f7580; font-weight: 400; letter-spacing: 0; }
.c-alert { padding-top: 82px; }
.p-alert { width: 200px; }
.c-alert .line { margin-top: 26px; align-items: center; }
.c-alert .field { letter-spacing: -.25px; }
.btn-alert { width: 58px; height: 46px; margin: 0 4px 0 3px; border: 1px solid #4a90f0; }
.btn-conf { width: 77px; }
.row3 { padding-top: 29px; }
.c-table { width: 768px; }
.p-table { width: 166px; }
.frame { width: 444px; margin: 27px 0 0 11px; border: 1px solid #777; border-bottom: 0; padding: 8px; }
table { border-collapse: separate; border-spacing: 2px; table-layout: fixed; width: 426px; line-height: 22.2px; }
th { background: #318a9b; color: #f0ead8; font-size: 16.5px; letter-spacing: -.5px; font-weight: 700; text-align: left; height: 36px; padding: 0 9px; }
td { border: 1px solid #5fa0ae; padding: 0 8px; font-size: 15px; letter-spacing: -.3px; white-space: normal; }
.w1 { width: 98px; }
.w2 { width: 261px; }
.r1 td { height: 75px; padding-bottom: 1px; }
.r2 td { height: 52px; }
.just { text-align: justify; }
.p-elem { width: 222px; }
.c-elem .line { margin-top: 27px; gap: 4px; }
.btn-hide { width: 54px; }
.btn-show { width: 58px; }
.c-elem .field { margin-top: 22px; }

/* recorded taskbar */
.v-task { flex: none; height: 31px; background: #080d17; display: flex; overflow: hidden; position: relative; }
.v-start { width: 53px; padding: 12px 0 0 16px; color: #fff; }
.v-search { width: 381px; background: #f1f0f1; display: flex; padding: 9px 0 0 12px; color: #333; font-size: 16px; letter-spacing: -.35px; line-height: 28px; }
.ring { width: 22px; height: 22px; margin: 2px 11px 0 0; border: 3px solid #111; border-radius: 50%; }
.mic { width: 14px; height: 20px; margin: 3px 16px 0 auto; }
.vs { width: 53.3px; display: flex; justify-content: center; padding-top: 10px; color: #ddd; }
.vs-on { background: #3b3f4a; }
.v-tray { display: flex; margin-left: 27px; padding-top: 13px; color: #fff; gap: 20px; --gap: #080d17; }
.v-caret { margin: 5px 0 0 6px; }
.v-wifi { margin-left: -2px; }
.v-speaker { margin-left: -3px; }
.v-clock { width: 60px; margin: -10px 0 0 -7px; font-size: 13px; letter-spacing: -.4px; line-height: 18px; text-align: center; display: flex; flex-direction: column; }
.v-note { position: relative; margin-left: 1px; }
.v-note em { position: absolute; left: 4px; top: 6px; width: 18px; height: 18px; border: 1px solid #8a8f98; border-radius: 50%; background: rgba(40, 45, 55, .7); font: 10px/16px "Open Sans", sans-serif; text-align: center; }
.watermark { position: absolute; left: 1434px; top: 2px; color: #a9acb0; font-size: 16px; line-height: 22px; opacity: .8; }

/* alert box over the page */
.dialog { position: absolute; left: 507px; top: 75px; width: 498px; height: 145px; padding: 17px 16px 0 18px; background: #fff; border: 1px solid #c9c9c9; border-radius: 3px; box-shadow: 0 3px 6px rgba(0, 0, 0, .4); }
.dialog p { margin: 0; }
.d-title { font-size: 16px; letter-spacing: -.28px; line-height: 26px; color: #333; }
.dialog .d-msg { font-size: 14px; letter-spacing: -.18px; line-height: 20px; margin-top: 9px; color: #757575; }
.ok { width: 72px; height: 37px; margin: 18px 0 0 auto; background: #6094ee; border-radius: 3px; color: #e5eeff; font-size: 14px; font-weight: 600; display: grid; place-items: center; }
.cursor { position: absolute; left: 437px; top: 105px; width: 14px; height: 22px; }

/* system taskbar */
.taskbar { flex: none; height: 50px; display: flex; background: linear-gradient(90deg, #c9dfe6 0, #dfe4e1 120px, #dce3e0 180px, #c9dde5 280px, #cfdfe6 600px, #d6dbe6 760px, #cfdee4 900px, #cfdfe6 1300px, #d5dbe5 1600px, #cedde5 1920px); color: #111; }
.s60 { width: 60px; display: grid; place-items: center; color: #000; }
.s62 { width: 62px; display: grid; place-items: center; position: relative; }
.apps { display: flex; margin-left: 3px; }
.on { background: #eff3f7; box-shadow: inset 0 -3px #0a76d3; }
.run::after { content: ""; position: absolute; bottom: 0; left: 5px; width: 51px; height: 3px; background: #0a76d3; }
.tray { display: flex; align-items: center; margin-left: 275px; font-size: 16px; }
.moon { width: 28px; height: 30px; }
.temp { width: 48px; margin-left: 11px; font-size: 16.5px; }
.clear { width: 52px; font-size: 16.5px; }
.tray-icons { display: flex; margin-left: 12px; }
.tray-icons span { width: 30px; display: grid; place-items: center; }
.eng { width: 36px; margin-left: 9px; font-size: 14.5px; letter-spacing: -.5px; }
.clock { width: 92px; display: flex; flex-direction: column; font-size: 15px; letter-spacing: -.35px; line-height: 24px; text-align: center; }
.time { letter-spacing: -.8px; }
.notif { position: relative; margin-left: 16px; --gap: #d5dbe5; }
.notif em { position: absolute; left: 10px; top: 9px; width: 20px; height: 20px; border-radius: 50%; border: 1px solid #777; background: #d9dee2; font: 600 12px/18px "Open Sans", sans-serif; text-align: center; }
```
